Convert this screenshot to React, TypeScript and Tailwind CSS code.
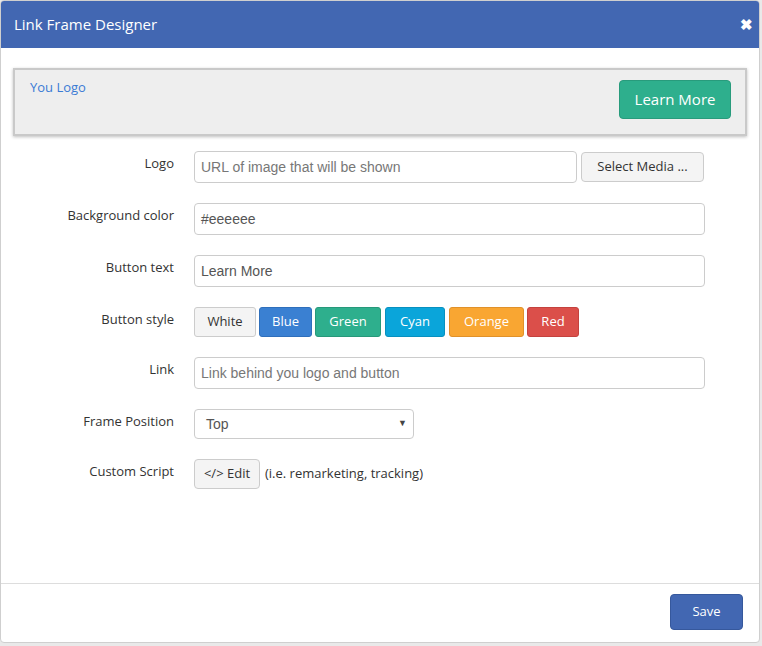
import React from "react";

const font = { fontFamily: '"Open Sans", "Liberation Sans", sans-serif' };
const arial = { fontFamily: '"Liberation Sans", Arial, sans-serif' };

function Label({ children }: { children: React.ReactNode }) {
  return (
    <div className="w-[161px] shrink-0 pt-[3px] text-right text-[13px] leading-[18px] text-[#333]">
      {children}
    </div>
  );
}

export default function App() {
  const styles = [
    { t: "White", c: "w-[62px] bg-[#f4f4f4] border-[#cccccc] text-[#333]" },
    { t: "Blue", c: "w-[53px] ml-[3px] bg-[#3a80d2] border-[#2f6fbb] text-white" },
    { t: "Green", c: "w-[66px] ml-[3px] bg-[#2eaf8d] border-[#27987a] text-white" },
    { t: "Cyan", c: "w-[60px] ml-[4px] bg-[#0aa5da] border-[#0890bf] text-white" },
    { t: "Orange", c: "w-[75px] ml-[4px] bg-[#f9a632] border-[#e0912a] text-white" },
    { t: "Red", c: "w-[52px] ml-[3px] bg-[#db4f4a] border-[#c4423e] text-white" },
  ];
  return (
    <div className="w-[762px] h-[646px] bg-[#e9e9e9] overflow-hidden" style={font}>
      <div className="w-[760px] h-[643px] bg-white rounded-[4px] border border-[#cfcfcf] overflow-hidden flex flex-col">
        <div className="h-[47px] bg-[#4267b2] flex items-center justify-between pl-[13px] pr-[6px] shrink-0">
          <span className="text-white text-[15px] leading-none">Link Frame Designer</span>
          <span className="text-white text-[15px] font-bold leading-none">✖</span>
        </div>
        <div className="flex-1 px-[12px] pt-[20px]">
          <div className="h-[68px] bg-[#eeeeee] border-2 border-[#c9c9c9] shadow-[0_1px_3px_rgba(0,0,0,0.25)] flex justify-between pl-[15px] pr-[14px] pt-[10px]">
            <span className="text-[13px] text-[#3a7bd5] leading-[18px] -mt-[2px]">You Logo</span>
            <button className="w-[112px] h-[39px] bg-[#2eaf8d] border border-[#289b7c] rounded-[4px] text-white text-[15px]">
              Learn More
            </button>
          </div>
          <div className="mt-[15px] flex flex-col gap-[20px]">
            <div className="flex gap-[20px] items-start">
              <Label>Logo</Label>
              <div className="flex items-center gap-[4px]">
                <div className="w-[383px] h-[32px] border border-[#cccccc] rounded-[4px] px-[6px] flex items-center text-[14px] text-[#777]" style={arial}>
                  URL of image that will be shown
                </div>
                <button className="w-[123px] h-[30px] bg-[#f4f4f4] border border-[#cccccc] rounded-[4px] text-[13px] text-[#333]">
                  Select Media ...
                </button>
              </div>
            </div>
            <div className="flex gap-[20px] items-start">
              <Label>Background color</Label>
              <div className="w-[511px] h-[32px] border border-[#cccccc] rounded-[4px] px-[6px] flex items-center text-[14px] text-[#555]" style={arial}>
                #eeeeee
              </div>
            </div>
            <div className="flex gap-[20px] items-start">
              <Label>Button text</Label>
              <div className="w-[511px] h-[32px] border border-[#cccccc] rounded-[4px] px-[6px] flex items-center text-[14px] text-[#555]" style={arial}>
                Learn More
              </div>
            </div>
            <div className="flex gap-[20px] items-start">
              <Label>Button style</Label>
              <div className="flex">
                {styles.map((s) => (
                  <button key={s.t} className={`${s.c} h-[30px] border rounded-[3px] text-[13px]`}>
                    {s.t}
                  </button>
                ))}
              </div>
            </div>
            <div className="flex gap-[20px] items-start">
              <Label>Link</Label>
              <div className="w-[511px] h-[32px] border border-[#cccccc] rounded-[4px] px-[6px] flex items-center text-[14px] text-[#777]" style={arial}>
                Link behind you logo and button
              </div>
            </div>
            <div className="flex gap-[20px] items-start">
              <Label>Frame Position</Label>
              <div className="w-[220px] h-[30px] border border-[#cccccc] rounded-[4px] pl-[11px] pr-[6px] flex items-center justify-between text-[14px] text-[#555]" style={arial}>
                <span>Top</span>
                <span className="text-[9px] text-[#444]">▼</span>
              </div>
            </div>
            <div className="flex gap-[20px] items-start">
              <Label>Custom Script</Label>
              <div className="flex items-center gap-[5px]">
                <button className="w-[66px] h-[30px] bg-[#f4f4f4] border border-[#cccccc] rounded-[4px] text-[13px] text-[#333]">
                  &lt;/&gt; Edit
                </button>
                <span className="text-[13px] text-[#333]">(i.e. remarketing, tracking)</span>
              </div>
            </div>
          </div>
        </div>
        <div className="h-[59px] border-t border-[#dddddd] flex justify-end items-start pt-[10px] pr-[16px] shrink-0">
          <button className="w-[73px] h-[36px] bg-[#4267b2] border border-[#36589c] rounded-[4px] text-white text-[13px]">
            Save
          </button>
        </div>
      </div>
    </div>
  );
}
